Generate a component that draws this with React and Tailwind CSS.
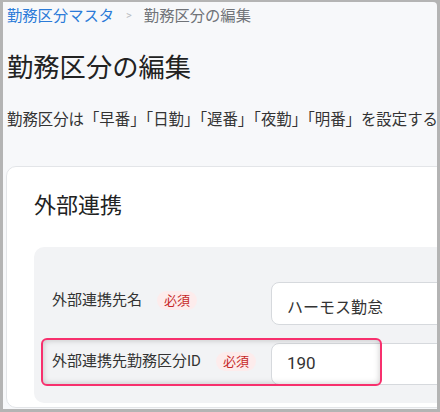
import React from "react";

const font = { fontFamily: 'Roboto, "Noto Sans CJK JP", sans-serif' };

function Badge() {
  return (
    <span className="inline-flex h-[19px] items-center rounded-full bg-[#fdecec] px-[7px] text-[13px] leading-none text-[#c62828]">
      必須
    </span>
  );
}

export default function App() {
  return (
    <div
      className="h-[412px] w-[440px] overflow-hidden bg-[#b4b4b4] pb-[3px] pl-[3px] pr-[3px] pt-[2px]"
      style={font}
    >
      <div className="h-full overflow-hidden rounded-tr-[4px] bg-[#f7f8fa] pl-[4px] pt-[4px]">
        <nav className="flex h-[20px] items-center text-[15.3px] leading-[20px]">
          <span className="text-[#2b7bd8]">勤務区分マスタ</span>
          <span className="mx-[12px] text-[11px] text-[#b8bcc2]">&gt;</span>
          <span className="text-[#707378]">勤務区分の編集</span>
        </nav>
        <h1 className="mt-[25px] whitespace-nowrap text-[26.3px] leading-[34px] text-[#222]">
          勤務区分の編集
        </h1>
        <p className="mt-[25px] whitespace-nowrap text-[15.4px] leading-[20px] text-[#333]">
          勤務区分は「早番」「日勤」「遅番」「夜勤」「明番」を設定する
        </p>
        <div className="ml-[-1px] mt-[36px] w-[560px] rounded-[10px] border border-[#e3e5e8] bg-white pl-[27px] pt-[24px] pb-[4px]">
          <h2 className="text-[22px] leading-[30px] text-[#222]">外部連携</h2>
          <div className="mt-[26px] rounded-[10px] bg-[#f2f3f5] pl-[18px] pt-[35px] pb-[18px]">
            <div className="flex items-start">
              <div className="flex w-[219px] shrink-0 items-center gap-[15px] pt-[8px] text-[15px] leading-[20px] text-[#333]">
                <span>外部連携先名</span>
                <Badge />
              </div>
              <div className="flex h-[43px] flex-1 items-center rounded-[8px] border border-[#d6d9dd] bg-white pl-[15px] pt-[8px] text-[16px] text-[#333]">
                ハーモス勤怠
              </div>
            </div>
            <div className="relative mt-[18px] flex items-start">
              <div className="pointer-events-none absolute left-[-11px] top-[-5px] z-10 h-[48px] w-[341px] rounded-[6px] border-2 border-[#f7306d] shadow-[inset_0_0_6px_rgba(0,0,0,0.22)]" />
              <div className="flex w-[219px] shrink-0 items-center gap-[15px] pt-[8px] text-[15px] leading-[20px] text-[#333]">
                <span>外部連携先勤務区分ID</span>
                <Badge />
              </div>
              <div className="flex h-[42px] flex-1 items-center rounded-[8px] border border-[#d6d9dd] bg-white pl-[15px] text-[17px] text-[#333]">
                190
              </div>
            </div>
          </div>
        </div>
      </div>
    </div>
  );
}
